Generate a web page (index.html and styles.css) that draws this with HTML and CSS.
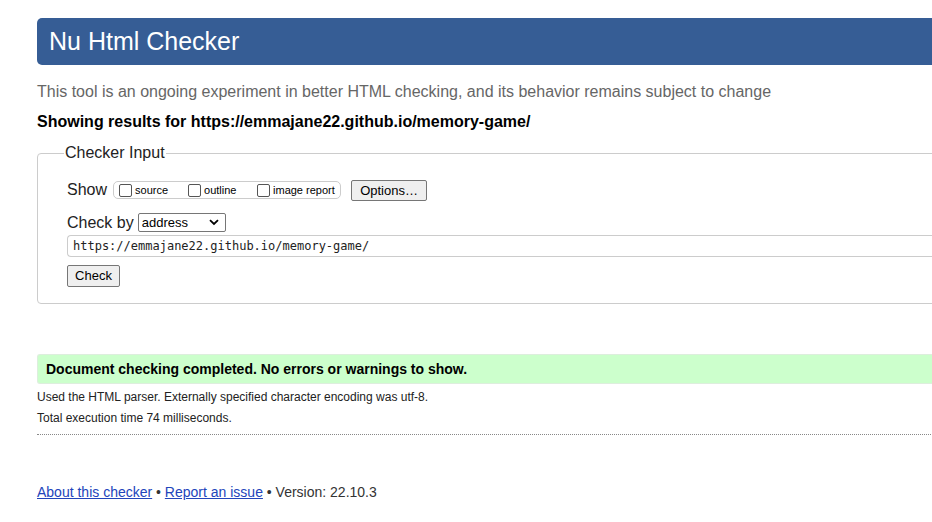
FILE: index.html
```html
<!DOCTYPE html>
<html lang="en">
<head>
<meta charset="utf-8">
<title>Nu Html Checker</title>
<link rel="stylesheet" href="styles.css">
</head>
<body>
<div class="page">
  <h1 class="banner">Nu Html Checker</h1>
  <p class="intro">This tool is an ongoing experiment in better HTML checking, and its behavior remains subject to change</p>
  <p class="results-for">Showing results for https://emmajane22.github.io/memory-game/</p>
  <fieldset class="input-box">
    <legend class="legend">Checker Input</legend>
    <div class="row show-row">
      <span class="row-label">Show</span>
      <span class="show-group">
        <label class="opt opt-source"><span class="cb"></span>source</label>
        <label class="opt opt-outline"><span class="cb"></span>outline</label>
        <label class="opt"><span class="cb"></span>image report</label>
      </span>
      <span class="btn options-btn">Options…</span>
    </div>
    <div class="row checkby-row">
      <span class="row-label">Check by</span>
      <span class="select">address<svg class="chev" width="10" height="7" viewBox="0 0 10 7"><path d="M1 1.2 L5 5 L9 1.2" fill="none" stroke="#000" stroke-width="1.8"/></svg></span>
    </div>
    <div class="url-input">https://emmajane22.github.io/memory-game/</div>
    <div class="row">
      <span class="btn check-btn">Check</span>
    </div>
  </fieldset>
  <div class="success">Document checking completed. No errors or warnings to show.</div>
  <p class="details">Used the HTML parser. Externally specified character encoding was utf-8.</p>
  <p class="details">Total execution time 74 milliseconds.</p>
  <hr class="dotted">
  <p class="footer"><a href="#">About this checker</a> • <a href="#">Report an issue</a> • Version: 22.10.3</p>
</div>
</body>
</html>
```
FILE: styles.css
```css
html, body {
  margin: 0;
  padding: 0;
  background: #fff;
  overflow: hidden;
}
body {
  font-family: "Liberation Sans", Arial, sans-serif;
  color: #000;
}
.page {
  margin-left: 37px;
  padding-top: 18px;
  width: 1000px;
}
.banner {
  margin: 0;
  height: 47px;
  background: #365d95;
  color: #fff;
  font-weight: normal;
  font-size: 25px;
  line-height: 47px;
  padding-left: 12px;
  border-radius: 5px 0 0 5px;
}
.intro {
  margin: 17px 0 0;
  color: #666;
  font-size: 16px;
  line-height: 20px;
}
.results-for {
  margin: 10px 0 0;
  font-weight: bold;
  font-size: 16px;
  line-height: 20px;
}
.input-box {
  margin: 12px 0 0;
  border: 1px solid #ccc;
  border-radius: 4px;
  padding: 6px 0 16px 29px;
  min-width: 0;
}
.legend {
  font-size: 16px;
  padding: 0 1px;
  margin-left: -3px;
  color: #222;
}
.row {
  display: flex;
  align-items: center;
}
.row-label {
  font-size: 16px;
  color: #222;
}
.show-row {
  margin-top: 11px;
  height: 22px;
}
.show-group {
  display: inline-flex;
  align-items: center;
  margin-left: 6px;
  border: 1px solid #ccc;
  border-radius: 5px;
  height: 16px;
  padding: 0 4px 0 5px;
  width: 217px;
}
.opt {
  display: inline-flex;
  align-items: center;
  font-size: 11px;
  color: #000;
}
.opt-source { width: 69px; }
.opt-outline { width: 69px; }
.cb {
  display: inline-block;
  width: 11px;
  height: 11px;
  border: 1px solid #555;
  border-radius: 2px;
  margin-right: 3px;
  background: #fff;
}
.btn {
  display: inline-block;
  box-sizing: border-box;
  border: 1px solid #767676;
  border-radius: 2px;
  background: #efefef;
  font-size: 13px;
  color: #000;
  text-align: center;
}
.options-btn {
  margin-left: 10px;
  width: 76px;
  height: 21px;
  line-height: 19px;
}
.checkby-row {
  margin-top: 12px;
  height: 19px;
}
.select {
  margin-left: 4px;
  box-sizing: border-box;
  width: 88px;
  height: 19px;
  border: 1px solid #767676;
  border-radius: 2px;
  font-size: 13px;
  line-height: 17px;
  padding-left: 3px;
  display: inline-flex;
  align-items: center;
  justify-content: space-between;
  padding-right: 6px;
}
.chev { display: block; }
.url-input {
  margin-top: 3px;
  box-sizing: border-box;
  height: 22px;
  border: 1px solid #ccc;
  border-right: none;
  border-radius: 4px 0 0 4px;
  font-family: "DejaVu Sans Mono", "Liberation Mono", monospace;
  font-size: 12px;
  line-height: 20px;
  padding-left: 5px;
  color: #222;
}
.check-btn {
  margin-top: 8px;
  width: 53px;
  height: 22px;
  line-height: 20px;
  font-size: 13px;
}
.success {
  margin-top: 50px;
  box-sizing: border-box;
  height: 30px;
  background: #ccffcc;
  border: 1px solid #ddeedd;
  border-right: none;
  border-radius: 3px 0 0 3px;
  font-weight: bold;
  font-size: 14px;
  line-height: 28px;
  padding-left: 8px;
}
.details {
  margin: 6px 0 0;
  font-size: 12px;
  line-height: 15px;
  color: #222;
}
.details + .details { margin-top: 6px; }
.dotted {
  margin: 8px 0 0;
  border: none;
  border-top: 1px dotted #888;
  height: 0;
}
.footer {
  margin: 49px 0 0;
  font-size: 14px;
  color: #333;
}
.footer a {
  color: #2244bb;
  text-decoration: underline;
}
```
